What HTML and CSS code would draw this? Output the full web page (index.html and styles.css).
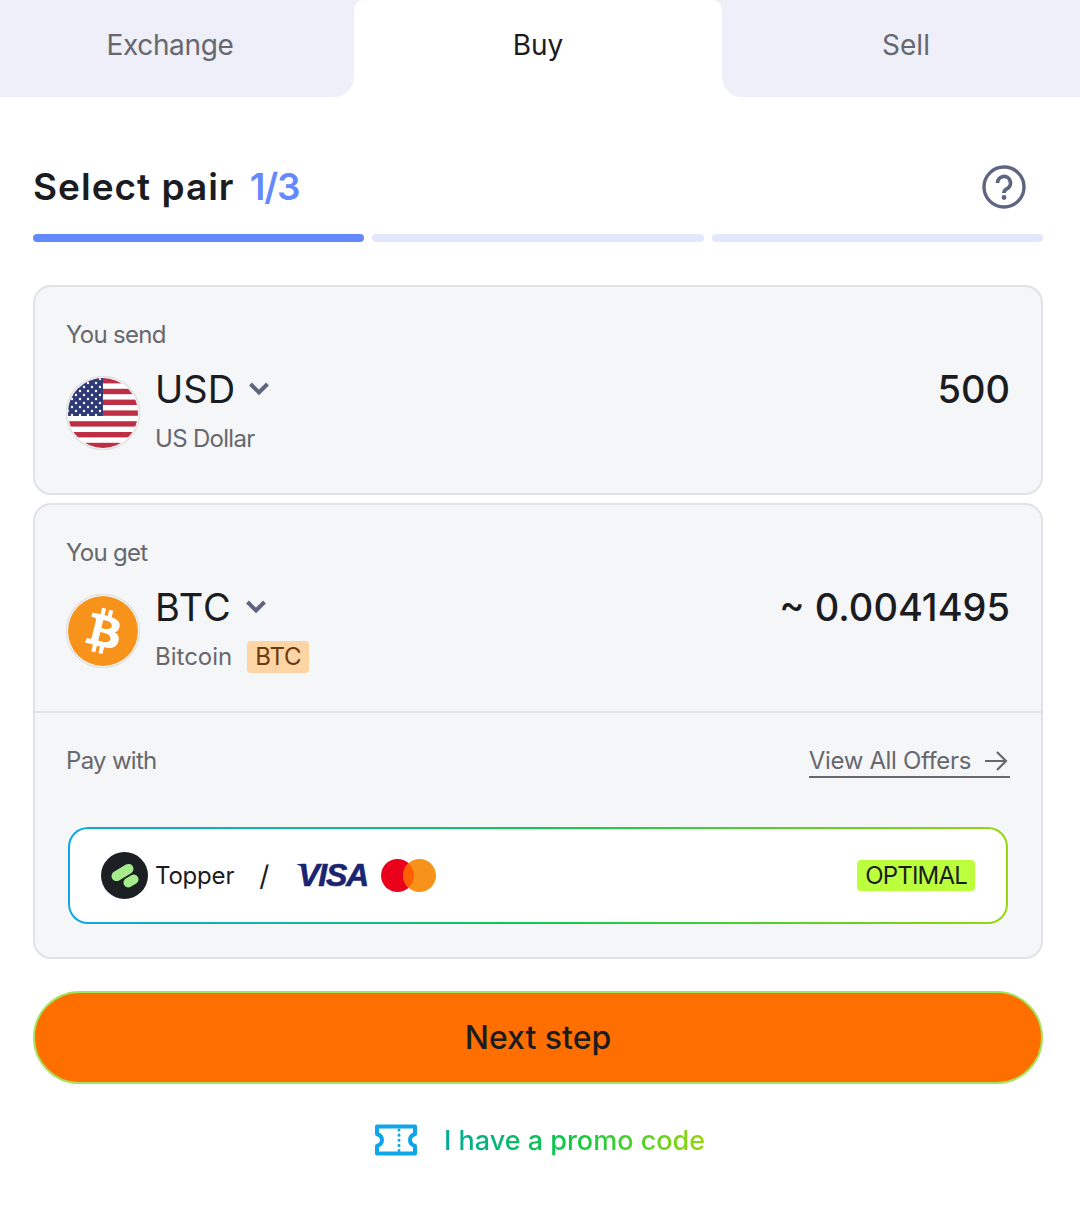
FILE: index.html
```html
<!DOCTYPE html>
<html lang="en">
<head>
    <meta charset="UTF-8">
    <title>Buy crypto</title>
    <link rel="stylesheet" href="styles.css">
</head>
<body>
    <div class="tabs">
        <div class="tab tab-left">Exchange</div>
        <div class="tab tab-active">Buy</div>
        <div class="tab tab-right">Sell</div>
    </div>

    <div class="content">
        <div class="step-head">
            <h1 class="step-title">Select pair <span class="step-num">1/3</span></h1>
            <svg class="help" width="44" height="44" viewBox="0 0 44 44" fill="none">
                <circle cx="22" cy="22" r="20" stroke="#5f6580" stroke-width="3.4"/>
                <path d="M15.500 18a6.500 6.500 0 1 1 9.600 5.700c-2 1.100-3.100 2-3.100 4.300" stroke="#5f6580" stroke-width="3.800"/>
                <circle cx="22" cy="32.500" r="2.400" fill="#5f6580"/>
            </svg>
        </div>
        <div class="progress">
            <span class="bar bar-on"></span>
            <span class="bar"></span>
            <span class="bar"></span>
        </div>

        <div class="card">
            <div class="section">
                <div class="label">You send</div>
                <div class="coin-row">
                    <svg class="coin-icon" width="74" height="74" viewBox="0 0 74 74">
                        <defs>
                            <clipPath id="flagClip"><circle cx="37" cy="37" r="35"/></clipPath>
                            <pattern id="stars" width="8" height="8" patternUnits="userSpaceOnUse" x="0" y="1">
                                <circle cx="2" cy="2" r="1.200" fill="#fff"/>
                                <circle cx="6" cy="6" r="1.200" fill="#fff"/>
                            </pattern>
                        </defs>
                        <circle cx="37" cy="37" r="36.500" fill="#fff" stroke="#dfe0e3" stroke-width="1.500"/>
                        <g clip-path="url(#flagClip)">
                            <rect x="0" y="2" width="74" height="5.400" fill="#bd2f45"/>
                            <rect x="0" y="12.800" width="74" height="5.400" fill="#bd2f45"/>
                            <rect x="0" y="23.600" width="74" height="5.400" fill="#bd2f45"/>
                            <rect x="0" y="34.400" width="74" height="5.400" fill="#bd2f45"/>
                            <rect x="0" y="45.200" width="74" height="5.400" fill="#bd2f45"/>
                            <rect x="0" y="56" width="74" height="5.400" fill="#bd2f45"/>
                            <rect x="0" y="66.800" width="74" height="5.400" fill="#bd2f45"/>
                            <rect x="0" y="2" width="37" height="38" fill="#2f3a78"/>
                            <rect x="0" y="2" width="37" height="38" fill="url(#stars)"/>
                        </g>
                    </svg>
                    <div class="coin-info">
                        <div class="coin-name">USD
                            <svg class="chevron" width="22" height="15" viewBox="0 0 22 15" fill="none"><path d="M2.500 3l8.500 8.500L19.500 3" stroke="#5f6580" stroke-width="4"/></svg>
                        </div>
                        <div class="coin-sub coin-sub-tight">US Dollar</div>
                    </div>
                    <div class="amount">500</div>
                </div>
            </div>
        </div>

        <div class="card card-get">
            <div class="section section-line">
                <div class="label">You get</div>
                <div class="coin-row">
                    <svg class="coin-icon" width="74" height="74" viewBox="0 0 74 74">
                        <circle cx="37" cy="37" r="36.500" fill="#fff" stroke="#dfe0e3" stroke-width="1.500"/>
                        <circle cx="37" cy="37" r="35" fill="#f7931a"/>
                        <path transform="scale(2.312)" fill="#fff" fill-rule="nonzero" d="M23.189 14.02c.314-2.096-1.283-3.223-3.465-3.975l.708-2.84-1.728-.43-.69 2.765c-.454-.114-.92-.22-1.385-.326l.695-2.783L15.596 6l-.708 2.839c-.376-.086-.746-.17-1.104-.26l.002-.009-2.384-.595-.46 1.846s1.283.294 1.256.312c.7.175.826.638.805 1.006l-.806 3.235c.048.012.11.03.18.057l-.183-.045-1.13 4.532c-.086.212-.303.531-.793.41.018.025-1.256-.313-1.256-.313l-.858 1.978 2.25.561c.418.105.828.215 1.231.318l-.715 2.872 1.727.43.708-2.84c.472.127.93.245 1.378.357l-.706 2.828 1.728.43.715-2.866c2.948.558 5.164.333 6.097-2.333.752-2.146-.037-3.385-1.588-4.192 1.13-.26 1.98-1.003 2.207-2.538zm-3.95 5.538c-.533 2.147-4.148.986-5.32.695l.95-3.805c1.172.293 4.929.872 4.37 3.11zm.535-5.569c-.487 1.953-3.495.96-4.47.717l.86-3.45c.975.243 4.118.696 3.61 2.733z"/>
                    </svg>
                    <div class="coin-info">
                        <div class="coin-name coin-name-wide">BTC
                            <svg class="chevron" width="22" height="15" viewBox="0 0 22 15" fill="none"><path d="M2.500 3l8.500 8.500L19.500 3" stroke="#5f6580" stroke-width="4"/></svg>
                        </div>
                        <div class="coin-sub coin-sub-row">Bitcoin <span class="net-tag">BTC</span></div>
                    </div>
                    <div class="amount">~ 0.0041495</div>
                </div>
            </div>
            <div class="pay">
                <div class="pay-head">
                    <div class="label">Pay with</div>
                    <a class="offers">View All Offers
                        <svg width="24" height="22" viewBox="0 0 24 22" fill="none"><path d="M1 11h21M13 2l9 9-9 9" stroke="#66686e" stroke-width="2.200"/></svg>
                    </a>
                </div>
                <div class="offer-box">
                    <svg class="topper-logo" width="47" height="47" viewBox="0 0 47 47">
                        <circle cx="23.500" cy="23.500" r="23.500" fill="#1c1f23"/>
                        <rect x="9.500" y="15.500" width="24" height="10" rx="5" fill="#a6ec8d" transform="rotate(-31 21.500 20.500)"/>
                        <rect x="22" y="24.250" width="16" height="9.500" rx="4.750" fill="#a6ec8d" transform="rotate(-31 30 29)"/>
                    </svg>
                    <span class="topper-name">Topper</span>
                    <span class="slash">/</span>
                    <span class="visa">VISA</span>
                    <svg class="mc" width="55" height="33" viewBox="0 0 55 33">
                        <circle cx="16.500" cy="16.500" r="16.500" fill="#eb001b"/>
                        <circle cx="38.500" cy="16.500" r="16.500" fill="#f7931a"/>
                        <path d="M27.500 4.200A16.500 16.500 0 0 1 27.500 28.800A16.500 16.500 0 0 1 27.500 4.200z" fill="#ff5f00"/>
                    </svg>
                    <span class="optimal">OPTIMAL</span>
                </div>
            </div>
        </div>

        <button class="next-btn">Next step</button>

        <div class="promo">
            <svg width="44" height="32" viewBox="0 0 44 32" fill="none">
                <path d="M3 2.500h38v7.500c-3 1-5 3-5 6s2 5 5 6v7.500H3V22c3-1 5-3 5-6s-2-5-5-6z" stroke="#0ea5e9" stroke-width="4" stroke-linejoin="round"/>
                <path d="M25 6v21" stroke="#0ea5e9" stroke-width="3" stroke-linecap="round" stroke-dasharray="0.1 5"/>
            </svg>
            <span class="promo-text">I have a promo code</span>
        </div>
    </div>
</body>
</html>
```

FILE: styles.css
```css
* {
    padding: 0;
    margin: 0;
    box-sizing: border-box;
}
body {
    width: 1080px;
    min-height: 1205px;
    background: #fff;
    font-family: Inter, "Liberation Sans", sans-serif;
    color: #1b1c1f;
}
.tabs {
    display: grid;
    grid-template-columns: 354px 368px 1fr;
    height: 97px;
    background: linear-gradient(#eeeff8 50%, #fff 50%);
}
.tab {
    display: flex;
    align-items: center;
    justify-content: center;
    height: 97px;
    padding-bottom: 8px;
    font-size: 28px;
    color: #66686e;
    background: #eeeff8;
}
.tab-left {
    padding-right: 14px;
    border-bottom-right-radius: 20px;
    letter-spacing: -0.35px;
}
.tab-right {
    padding-left: 10px;
    border-bottom-left-radius: 20px;
}
.tab-active {
    color: #1b1c1f;
    background: #fff;
    border-radius: 10px 10px 0 0;
}
.content {
    padding: 0 37px 0 33px;
}
.step-head {
    display: flex;
    align-items: center;
    justify-content: space-between;
    height: 137px;
    padding: 68px 17px 25px 0;
}
.step-title {
    font-family: Inter, sans-serif;
    font-size: 37px;
    font-weight: 600;
    line-height: 44px;
    letter-spacing: 1px;
}
.step-num {
    margin-left: 5px;
    font-weight: 600;
    letter-spacing: -1.2px;
    color: #6489ff;
}
.progress {
    display: grid;
    grid-template-columns: repeat(3, 1fr);
    gap: 8px;
    margin-bottom: 43px;
}
.bar {
    height: 8px;
    border-radius: 4px;
    background: #e2e7fb;
}
.bar-on {
    background: #6489ff;
}
.card {
    border: 2px solid #e0e2e6;
    border-radius: 18px;
    background: #f5f6f8;
}
.card-get {
    margin-top: 8px;
}
.section {
    padding: 33px 31px 38px;
}
.section-line {
    border-bottom: 2px solid #e0e2e6;
}
.label {
    font-size: 24px;
    line-height: 30px;
    letter-spacing: -0.7px;
    color: #66686e;
}
.coin-row {
    display: flex;
    align-items: flex-start;
    margin-top: 16px;
}
.coin-icon {
    flex: none;
    margin: 10px 15px 0 0;
}
.coin-info {
    flex: 1;
}
.coin-name {
    display: flex;
    align-items: center;
    gap: 13px;
    height: 46px;
    font-size: 38px;
    line-height: 46px;
}
.coin-name-wide {
    letter-spacing: 1px;
}
.chevron {
    margin-top: -2px;
}
.coin-sub {
    margin-top: 11px;
    font-size: 24px;
    line-height: 32px;
    color: #66686e;
}
.coin-sub-tight {
    letter-spacing: -0.7px;
}
.coin-sub-row {
    display: flex;
    align-items: center;
    gap: 15px;
}
.net-tag {
    padding: 0 8px;
    border-radius: 4px;
    letter-spacing: -0.2px;
    background: #fdd5a5;
    color: #6c3a10;
}
.amount {
    font-size: 38px;
    line-height: 46px;
    font-weight: 500;
}
.pay {
    padding: 33px 31px 33px;
}
.pay-head {
    display: flex;
    justify-content: space-between;
    align-items: flex-start;
    margin-bottom: 49px;
}
.offers {
    display: flex;
    align-items: center;
    gap: 13px;
    height: 33px;
    margin-top: -1px;
    padding-right: 2px;
    font-size: 24px;
    letter-spacing: -0.35px;
    color: #66686e;
    border-bottom: 2px solid #66686e;
}
.offer-box {
    display: flex;
    align-items: center;
    height: 97px;
    margin: 0 2px;
    padding: 0 31px;
    border: 2px solid transparent;
    border-radius: 20px;
    background: linear-gradient(#fff, #fff) padding-box, linear-gradient(90deg, #0ea5e9, #0ccb4f 50%, #97d60a) border-box;
}
.topper-logo {
    flex: none;
    margin-right: 7px;
}
.topper-name {
    font-size: 24px;
    letter-spacing: -0.2px;
}
.slash {
    margin: 0 29px 0 25px;
    font-size: 28px;
}
.visa {
    position: relative;
    font-family: "Liberation Sans", sans-serif;
    font-size: 32px;
    font-weight: 700;
    font-style: italic;
    letter-spacing: -1.3px;
    color: #1a2470;
    -webkit-text-stroke: 0.6px #1a2470;
}
.visa::before {
    content: "";
    position: absolute;
    left: -2px;
    top: 7px;
    width: 10px;
    height: 5px;
    background: #1a2470;
    clip-path: polygon(0 0, 100% 0, 100% 100%);
}
.mc {
    flex: none;
    margin-left: 13px;
}
.optimal {
    margin-left: auto;
    padding: 0 8px;
    border-radius: 4px;
    font-size: 24px;
    line-height: 31px;
    letter-spacing: -0.8px;
    background: #bcff3d;
}
.next-btn {
    display: block;
    width: 100%;
    height: 93px;
    margin-top: 32px;
    border: 2px solid #a4e35a;
    border-radius: 47px;
    background: #ff6f00;
    font-family: Inter, sans-serif;
    font-size: 32px;
    font-weight: 500;
    color: #1b1c1f;
}
.promo {
    display: flex;
    align-items: center;
    justify-content: center;
    gap: 26px;
    margin-top: 39px;
    height: 34px;
    padding-left: 3px;
}
.promo-text {
    font-size: 27px;
    font-weight: 500;
    background: linear-gradient(90deg, #06a89a, #0ccb3f 50%, #97d60a);
    -webkit-background-clip: text;
    background-clip: text;
    color: transparent;
}
```
